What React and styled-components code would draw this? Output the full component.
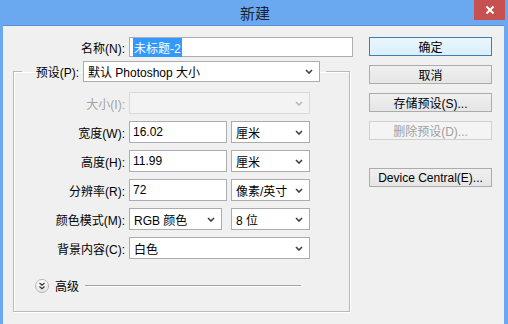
import React from 'react';
import styled, { createGlobalStyle } from 'styled-components';

const GlobalStyle = createGlobalStyle`
  html, body {
    margin: 0;
    padding: 0;
    background: #f0f0f0;
  }
  body {
    font-family: "Liberation Sans", "Noto Sans CJK SC", sans-serif;
    font-size: 12px;
    color: #000;
  }
`;

const Window = styled.div`
  width: 508px;
  height: 324px;
  display: flex;
  flex-direction: column;
  overflow: hidden;
  background: #6aa9ef;
`;

const TitleBar = styled.div`
  height: 25px;
  flex: none;
  display: flex;
  align-items: center;
  justify-content: center;
  position: relative;
`;

const Title = styled.div`
  font-family: "Noto Sans CJK SC", sans-serif;
  font-size: 15px;
  color: #1b2430;
  margin-left: 2px;
`;

const CloseButton = styled.div`
  position: absolute;
  top: 0;
  right: 3px;
  width: 31px;
  height: 20px;
  background: #c75050;
  display: flex;
  align-items: center;
  justify-content: center;
`;

const Client = styled.div`
  flex: 1;
  display: flex;
  align-items: flex-start;
  background: #f0f0f0;
  margin: 0 4px 0 3px;
  padding: 11px 0 0 10px;
  border-top: 1px solid #5b8fcc;
`;

const MainColumn = styled.div`
  width: 340px;
  display: flex;
  flex-direction: column;
  align-items: flex-start;
`;

const Row = styled.div`
  display: flex;
  align-items: center;
  height: ${p => p.$h || 22}px;
  margin-bottom: ${p => p.$mb ?? 7}px;
`;

const Label = styled.div`
  width: ${p => p.$w || 111}px;
  flex: none;
  text-align: right;
  margin-right: 4px;
  white-space: nowrap;
  color: ${p => (p.$disabled ? '#a3a3a3' : '#000')};
`;

const TextBox = styled.div`
  box-sizing: border-box;
  width: ${p => p.$w}px;
  height: 100%;
  background: #fff;
  border: 1px solid #abadb3;
  display: flex;
  align-items: center;
  padding-left: 3px;
  margin-right: ${p => p.$mr || 0}px;
`;

const Selected = styled.span`
  background: #3399ff;
  color: #fff;
  padding: 1px 1px;
`;

const SelectBox = styled.div`
  box-sizing: border-box;
  width: ${p => p.$w}px;
  height: 100%;
  background: ${p => (p.$disabled ? '#f3f3f3' : '#fff')};
  border: 1px solid ${p => (p.$disabled ? '#d9d9d9' : '#acacac')};
  display: flex;
  align-items: center;
  justify-content: space-between;
  padding: 0 6px 0 4px;
  margin-right: ${p => p.$mr || 0}px;
  white-space: nowrap;
`;

const Group = styled.fieldset`
  box-sizing: border-box;
  width: 337px;
  margin: 4px 0 0 0;
  padding: 10px 0 18px 0;
  border: 1px solid #b9b9b9;
  box-shadow: 1px 1px 0 #fff, inset 1px 1px 0 #fff;
`;

const Legend = styled.legend`
  display: flex;
  align-items: center;
  height: 21px;
  margin-left: 8px;
  padding: 0 6px 0 12px;
`;

const Advanced = styled.div`
  display: flex;
  align-items: center;
  margin: 19px 0 0 21px;
  height: 15px;
`;

const RoundToggle = styled.div`
  box-sizing: border-box;
  width: 14px;
  height: 14px;
  border-radius: 50%;
  border: 1px solid #b5b5b5;
  background: linear-gradient(#ffffff, #e4e4e4);
  display: flex;
  align-items: center;
  justify-content: center;
  margin-right: 6px;
`;

const Rule = styled.div`
  flex: none;
  width: 216px;
  height: 1px;
  background: #a0a0a0;
  box-shadow: 0 1px 0 #fff;
  margin-left: 6px;
`;

const ButtonColumn = styled.div`
  display: flex;
  flex-direction: column;
  margin-left: 16px;
  width: 123px;
`;

const Button = styled.div`
  box-sizing: border-box;
  height: 19px;
  margin-bottom: ${p => p.$mb ?? 9}px;
  display: flex;
  align-items: center;
  justify-content: center;
  white-space: nowrap;
  border: 1px solid ${p => (p.$primary ? '#3c7fb1' : p.$disabled ? '#d0d0d0' : '#acacac')};
  background: ${p =>
    p.$primary
      ? 'linear-gradient(#eaf6fd, #d9f0fc)'
      : p.$disabled
      ? '#f4f4f4'
      : 'linear-gradient(#f0f0f0, #e5e5e5)'};
  color: ${p => (p.$disabled ? '#a0a0a0' : '#000')};
`;

const Chevron = ({ disabled }) => (
  <svg width="8" height="5" viewBox="0 0 8 5">
    <path d="M1 1 L4 4 L7 1" fill="none" stroke={disabled ? '#b8b8b8' : '#404040'} strokeWidth="1.6" />
  </svg>
);

const Select = ({ w, mr, disabled, children }) => (
  <SelectBox $w={w} $mr={mr} $disabled={disabled}>
    <span>{children}</span>
    <Chevron disabled={disabled} />
  </SelectBox>
);

export default function App() {
  return (
    <>
      <GlobalStyle />
      <Window>
        <TitleBar>
          <Title>新建</Title>
          <CloseButton>
            <svg width="10" height="10" viewBox="0 0 10 10">
              <path d="M1.5 1.5 L8.5 8.5 M8.5 1.5 L1.5 8.5" stroke="#fff" strokeWidth="2" />
            </svg>
          </CloseButton>
        </TitleBar>
        <Client>
          <MainColumn>
            <Row $h={20} $mb={0}>
              <Label $w={112}>名称(N):</Label>
              <TextBox $w={224}><Selected>未标题-2</Selected></TextBox>
            </Row>
            <Group>
              <Legend>
                <Label $w={45}>预设(P):</Label>
                <Select w={237}>默认 Photoshop 大小</Select>
              </Legend>
              <Row>
                <Label $disabled>大小(I):</Label>
                <Select w={181} disabled />
              </Row>
              <Row>
                <Label>宽度(W):</Label>
                <TextBox $w={98} $mr={4}>16.02</TextBox>
                <Select w={79}>厘米</Select>
              </Row>
              <Row>
                <Label>高度(H):</Label>
                <TextBox $w={98} $mr={4}>11.99</TextBox>
                <Select w={79}>厘米</Select>
              </Row>
              <Row>
                <Label>分辨率(R):</Label>
                <TextBox $w={98} $mr={4}>72</TextBox>
                <Select w={79}>像素/英寸</Select>
              </Row>
              <Row>
                <Label>颜色模式(M):</Label>
                <Select w={93} mr={9}>RGB 颜色</Select>
                <Select w={79}>8 位</Select>
              </Row>
              <Row $mb={0}>
                <Label>背景内容(C):</Label>
                <Select w={181}>白色</Select>
              </Row>
              <Advanced>
                <RoundToggle>
                  <svg width="8" height="8" viewBox="0 0 8 8">
                    <path d="M1.5 1 L4 3.3 L6.5 1 M1.5 4.5 L4 6.8 L6.5 4.5" fill="none" stroke="#333" strokeWidth="1.2" />
                  </svg>
                </RoundToggle>
                <span>高级</span>
                <Rule />
              </Advanced>
            </Group>
          </MainColumn>
          <ButtonColumn>
            <Button $primary>确定</Button>
            <Button>取消</Button>
            <Button>存储预设(S)...</Button>
            <Button $disabled $mb={28}>删除预设(D)...</Button>
            <Button>Device Central(E)...</Button>
          </ButtonColumn>
        </Client>
      </Window>
    </>
  );
}
